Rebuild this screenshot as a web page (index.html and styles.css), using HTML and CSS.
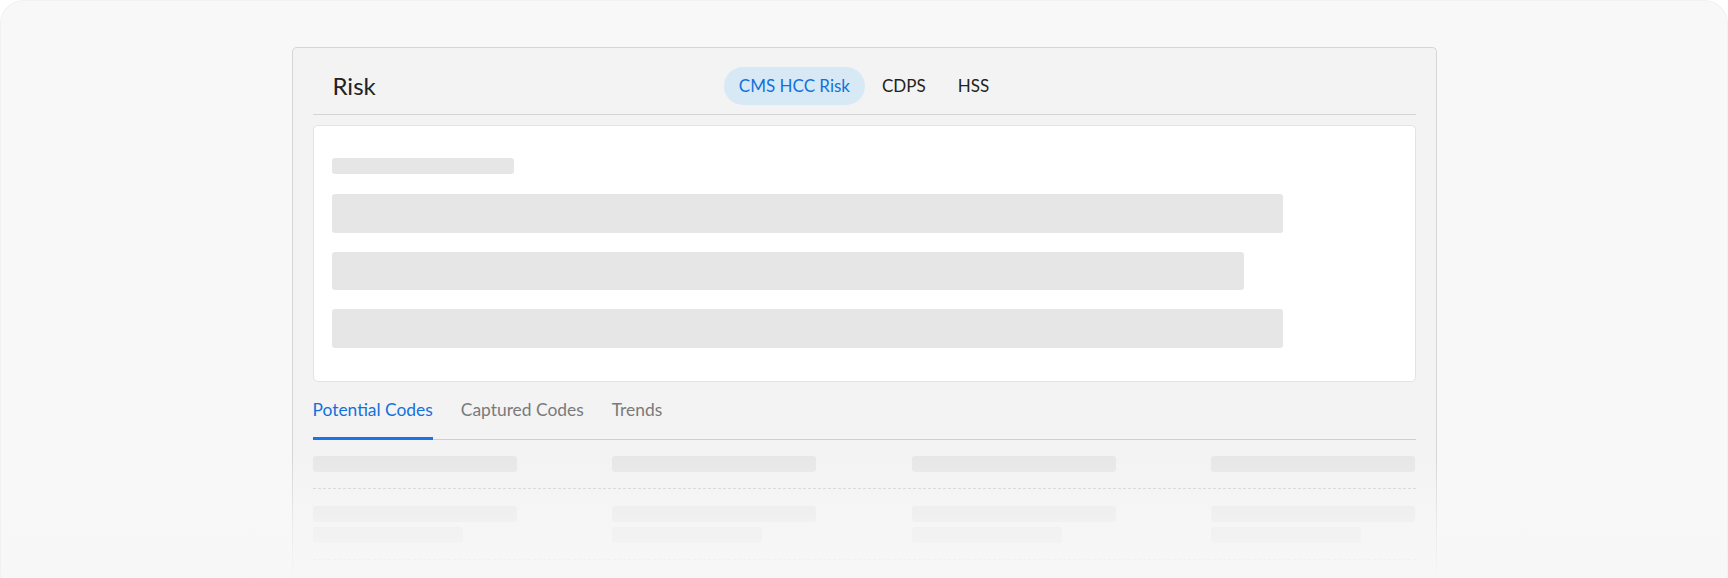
FILE: index.html
```html
<!DOCTYPE html>
<html lang="en">
<head>
<meta charset="utf-8">
<title>Risk</title>
<link rel="stylesheet" href="styles.css">
</head>
<body>
<div class="frame">
  <div class="card">
    <div class="header">
      <div class="title">Risk</div>
      <nav class="seg">
        <span class="seg-item active">CMS HCC Risk</span>
        <span class="seg-item">CDPS</span>
        <span class="seg-item">HSS</span>
      </nav>
      <div></div>
    </div>
    <div class="panel">
      <div class="sk sk-title"></div>
      <div class="sk sk-big w951"></div>
      <div class="sk sk-big w912"></div>
      <div class="sk sk-big w951"></div>
    </div>
    <div class="tabs">
      <span class="tab active">Potential Codes</span>
      <span class="tab">Captured Codes</span>
      <span class="tab">Trends</span>
    </div>
    <div class="row">
      <div class="cell"><div class="sk sk-line"></div></div>
      <div class="cell"><div class="sk sk-line"></div></div>
      <div class="cell"><div class="sk sk-line"></div></div>
      <div class="cell"><div class="sk sk-line"></div></div>
    </div>
    <div class="row">
      <div class="cell"><div class="sk sk-line"></div><div class="sk sk-line short"></div></div>
      <div class="cell"><div class="sk sk-line"></div><div class="sk sk-line short"></div></div>
      <div class="cell"><div class="sk sk-line"></div><div class="sk sk-line short"></div></div>
      <div class="cell"><div class="sk sk-line"></div><div class="sk sk-line short"></div></div>
    </div>
    <div class="row">
      <div class="cell"><div class="sk sk-line"></div><div class="sk sk-line short"></div></div>
      <div class="cell"><div class="sk sk-line"></div><div class="sk sk-line short"></div></div>
      <div class="cell"><div class="sk sk-line"></div><div class="sk sk-line short"></div></div>
      <div class="cell"><div class="sk sk-line"></div><div class="sk sk-line short"></div></div>
    </div>
  </div>
  <div class="fade"></div>
</div>
</body>
</html>
```

FILE: styles.css
```css
* { box-sizing: border-box; }
html, body { margin: 0; padding: 0; background: #ffffff; }
body { font-family: Lato, "Noto Sans", "Liberation Sans", sans-serif; color: #222; }

.frame {
  position: relative;
  height: 578px;
  overflow: hidden;
  background: #f8f8f8;
  border: 1px solid #f1f1f1;
  border-bottom: none;
  border-radius: 24px 24px 0 0;
  display: flex;
  justify-content: center;
  padding-top: 46px;
}

.card {
  width: 1145px;
  background: #f3f3f3;
  border: 1px solid #d6d6d6;
  border-bottom: none;
  border-radius: 5px 5px 0 0;
  padding: 0 20px;
}

.header {
  display: grid;
  grid-template-columns: 1fr auto 1fr;
  align-items: center;
  padding: 19px 0 9px;
  border-bottom: 1px solid #d4d4d4;
}
.title {
  padding-left: 20px;
  font-size: 24px;
  line-height: 30px;
  color: #222;
}
.seg { display: flex; gap: 2px; }
.seg-item {
  height: 38px;
  line-height: 38px;
  padding: 0 15px;
  border-radius: 19px;
  font-size: 17px;
  color: #222;
}
.seg-item.active { background: #d8e9f6; color: #1271dd; }

.panel {
  margin-top: 10px;
  background: #fff;
  border: 1px solid #e3e3e3;
  border-radius: 5px;
  padding: 32px 0 33px 18px;
}
.sk { background: #e6e6e6; border-radius: 3px; }
.sk-title { width: 182px; height: 16px; }
.sk-big { height: 38.4px; margin-top: 19.2px; }
.sk-title + .sk-big { margin-top: 20.3px; }
.w951 { width: 951px; }
.w912 { width: 912px; }

.tabs {
  margin-top: 15px;
  display: flex;
  gap: 28px;
  border-bottom: 1px solid #cfcfcf;
}
.tab {
  font-size: 17.4px;
  line-height: 25px;
  padding-bottom: 15px;
  border-bottom: 3px solid transparent;
  margin-bottom: -1px;
  color: #7a7a7a;
}
.tab.active { color: #1271dd; border-bottom-color: #1a73e8; }

.row {
  display: grid;
  grid-template-columns: repeat(4, 204px);
  justify-content: space-between;
  padding: 16px 0;
  border-bottom: 1px dashed #cfcfcf;
}
.row + .row { padding-top: 17px; }
.cell { display: flex; flex-direction: column; gap: 5px; }
.sk-line { height: 16px; background: #e7e7e7; }
.sk-line.short { width: 150px; }

.fade {
  position: absolute;
  left: 0; right: 0; bottom: 0;
  height: 120px;
  background: linear-gradient(to bottom, rgba(248,248,248,0) 0%, rgba(248,248,248,0.5) 45%, rgba(247,247,247,0.97) 100%);
}
```
